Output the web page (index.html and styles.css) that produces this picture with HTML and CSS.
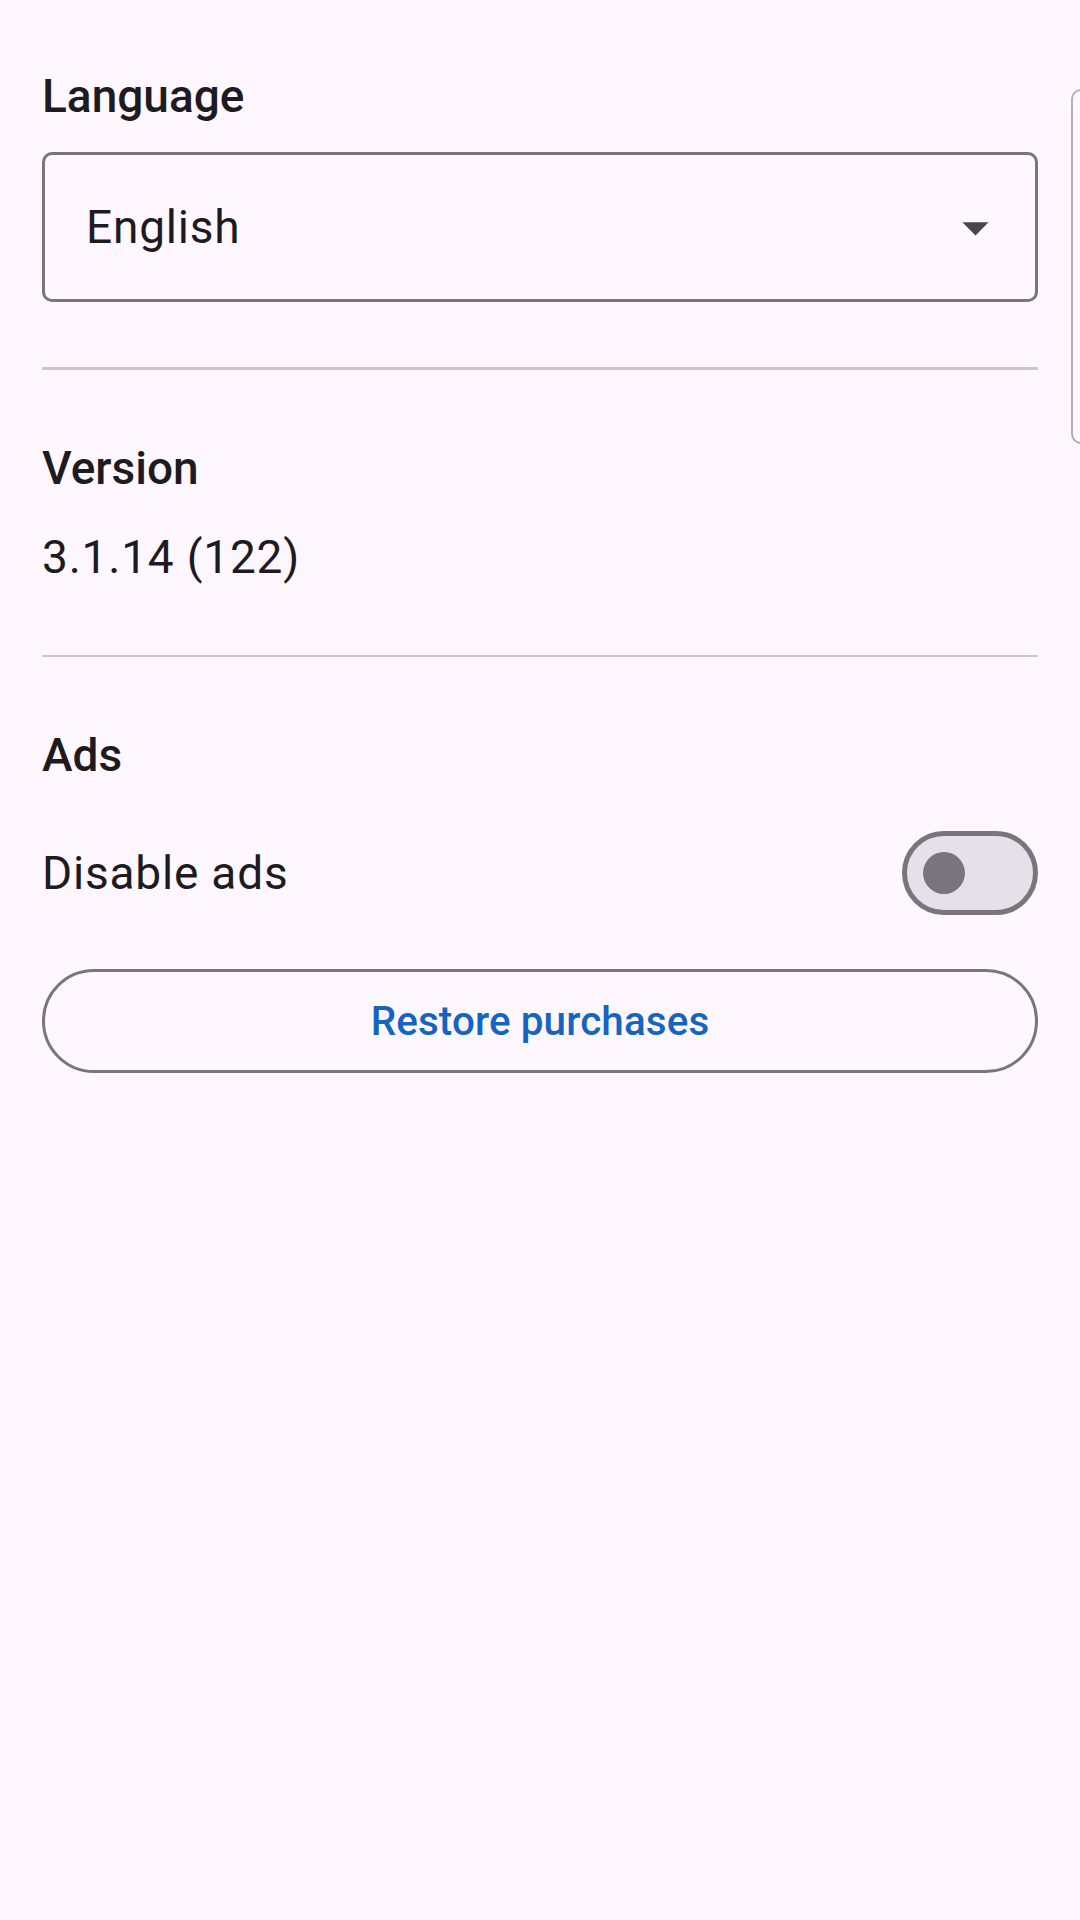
FILE: index.html
```html
<!DOCTYPE html>
<html lang="en">
<head>
<meta charset="utf-8">
<title>Settings</title>
<link rel="stylesheet" href="styles.css">
</head>
<body>
<main class="settings">
  <section class="group group--language">
    <h2 class="group-title">Language</h2>
    <div class="select">
      <span class="select-value">English</span>
      <svg class="select-arrow" viewBox="0 0 24 24" aria-hidden="true"><path d="M7 10l5 5 5-5z"/></svg>
    </div>
  </section>
  <hr class="divider">
  <section class="group group--version">
    <h2 class="group-title">Version</h2>
    <p class="value">3.1.14 (122)</p>
  </section>
  <hr class="divider">
  <section class="group group--ads">
    <h2 class="group-title">Ads</h2>
    <div class="switch-row">
      <span class="switch-label">Disable ads</span>
      <span class="switch"><span class="switch-thumb"></span></span>
    </div>
    <button class="outlined-btn" type="button">Restore purchases</button>
  </section>
</main>
<div class="peek-card"></div>
</body>
</html>
```

FILE: styles.css
```css
html, body {
  margin: 0;
  padding: 0;
  height: 100%;
  overflow: hidden;
}

body {
  background: #FEF7FF;
  color: #1D1B20;
  font-family: Roboto, "Noto Sans", "Liberation Sans", sans-serif;
  position: relative;
}

.settings {
  padding: 66px 42px 0 42px;
}

.group {
  margin: 0;
}

.group--language {
  padding-bottom: 65px;
}

.group--version {
  padding-bottom: 68px;
}

.group-title {
  margin: 0;
  font-size: 46px;
  line-height: 60px;
  font-weight: 500;
  letter-spacing: 0;
}

.select {
  margin-top: 26px;
  height: 150px;
  box-sizing: border-box;
  border: 3px solid #79747E;
  border-radius: 10px;
  display: flex;
  align-items: center;
  justify-content: space-between;
  padding: 0 28px 0 41px;
}

.select-value,
.value,
.switch-label {
  font-size: 46px;
  line-height: 60px;
  font-weight: 400;
  letter-spacing: 0.8px;
}

.select-arrow {
  width: 63px;
  height: 63px;
  fill: #49454F;
  flex: none;
}

.divider {
  margin: 0 0 68px 0;
  border: 0;
  height: 2.6px;
  background: #CAC4D0;
}

.value {
  margin: 29px 0 0 0;
}

.switch-row {
  margin-top: 46px;
  display: flex;
  align-items: center;
  justify-content: space-between;
}

.switch {
  width: 136px;
  height: 84px;
  box-sizing: border-box;
  border: 5px solid #79747E;
  border-radius: 42px;
  background: #E6E0E9;
  display: flex;
  align-items: center;
  padding-left: 16px;
}

.switch-thumb {
  width: 42px;
  height: 42px;
  border-radius: 50%;
  background: #79747E;
}

.outlined-btn {
  display: block;
  width: 100%;
  margin-top: 54px;
  height: 104px;
  box-sizing: border-box;
  border: 3px solid #79747E;
  border-radius: 52px;
  background: transparent;
  color: #1565C0;
  font-family: Roboto, "Noto Sans", "Liberation Sans", sans-serif;
  font-size: 40.4px;
  font-weight: 500;
  letter-spacing: 0.1px;
  padding: 0;
}

.peek-card {
  position: absolute;
  left: 1071px;
  top: 89px;
  width: 60px;
  height: 355px;
  box-sizing: border-box;
  border: 2px solid #B5B0B8;
  border-radius: 10px;
}
```
